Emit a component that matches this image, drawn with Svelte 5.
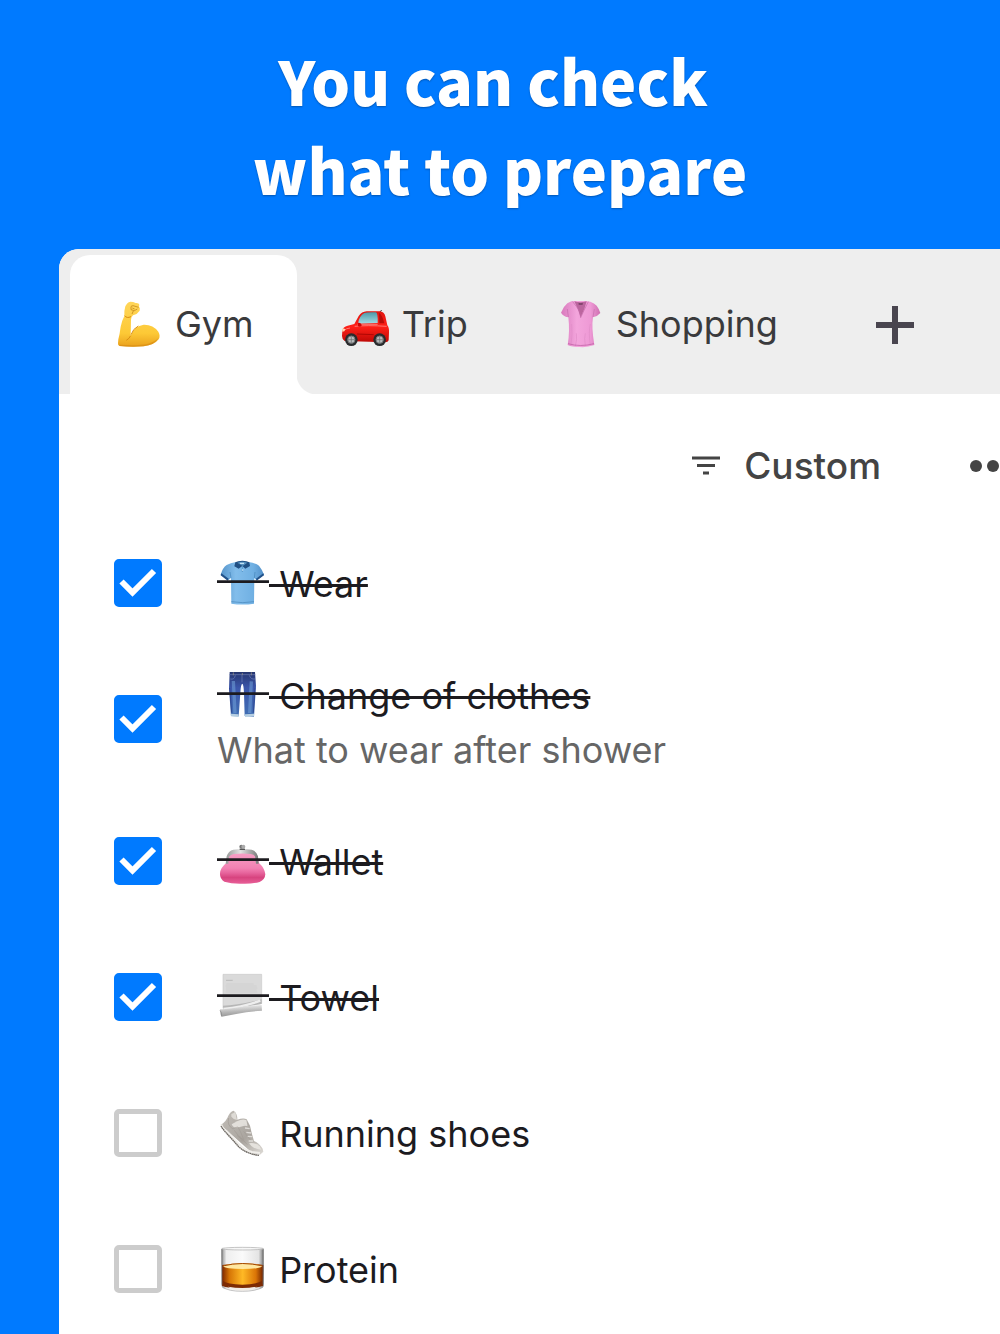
<script lang="ts">
	type Item = { id: string; icon: string; title: string; note?: string; done: boolean };

	const tabs = [
		{ icon: 'arm', label: 'Gym' },
		{ icon: 'car', label: 'Trip' },
		{ icon: 'blouse', label: 'Shopping' }
	];

	let active = $state('Gym');

	let items = $state<Item[]>([
		{ id: 'wear', icon: 'shirt', title: 'Wear', done: true },
		{
			id: 'clothes',
			icon: 'jeans',
			title: 'Change of clothes',
			note: 'What to wear after shower',
			done: true
		},
		{ id: 'wallet', icon: 'purse', title: 'Wallet', done: true },
		{ id: 'towel', icon: 'scroll', title: 'Towel', done: true },
		{ id: 'shoes', icon: 'shoe', title: 'Running shoes', done: false },
		{ id: 'protein', icon: 'glass', title: 'Protein', done: false }
	]);
</script>

{#snippet emoji(name: string, struck = false)}
	<svg class="emoji" viewBox="0 0 156 144" aria-hidden="true">
		{#if name === 'arm'}
			<defs>
				<linearGradient id="arm-skin" x1="0" y1="0" x2="0" y2="1">
					<stop offset="0" stop-color="#ffd65a" />
					<stop offset="0.7" stop-color="#fdc936" />
					<stop offset="1" stop-color="#e9a01c" />
				</linearGradient>
			</defs>
			<path
				d="M37 19Q42 7 52 5Q61 5 68 9Q78 8 79 14L78 20Q82 23 80 32Q74 42 60 46Q54 51 54 59L53 107Q64 78 92 74Q120 73 136 95Q143 108 137 118Q124 135 92 139Q58 142 20 138Q14 137 15 130L16 118Q20 103 23 80Q27 61 34 48Q33 32 37 19Z"
				fill="url(#arm-skin)"
			/>
			<path d="M35 47Q41 56 54 50M53 107Q49 116 40 121M54 104Q60 86 76 78" fill="none" stroke="#d98d12" stroke-width="3" />
			<path d="M54 19L60 17L77 22M54 20L54 29L64 32L73 27M58 24L65 27M61 33L57 42" fill="none" stroke="#b8770c" stroke-width="2" />
			<path d="M18 134Q75 138 106 131Q126 125 136 115Q126 135 92 139Q50 142 20 138Z" fill="#d98d12" opacity="0.7" />
		{:else if name === 'car'}
			<defs>
				<linearGradient id="car-glass" x1="0" y1="0" x2="0" y2="1">
					<stop offset="0" stop-color="#4d99a8" />
					<stop offset="1" stop-color="#a5dce4" />
				</linearGradient>
				<linearGradient id="car-body" x1="0" y1="0" x2="0" y2="1">
					<stop offset="0" stop-color="#e11510" />
					<stop offset="0.5" stop-color="#ff2018" />
					<stop offset="1" stop-color="#bd0805" />
				</linearGradient>
			</defs>
			<path d="M119 37L125 30" stroke="#444" stroke-width="3" />
			<path
				d="M7 92Q9 80 23 77L43 72L56 48Q65 35 80 34L119 34Q133 36 136 49L142 76Q148 83 147 98L146 121Q144 127 136 127L14 123Q6 118 6 108Z"
				fill="url(#car-body)"
			/>
			<path d="M54 71Q57 48 73 39Q81 36 108 37Q114 39 113 69Z" fill="url(#car-glass)" />
			<path d="M117 38Q127 45 133 70L118 70Z" fill="#b90c08" />
			<path d="M53 73L113 73M44 79Q81 75 140 79M30 84Q19 85 12 91" fill="none" stroke="#ff7771" stroke-width="3" />
			<path d="M51 102L101 104" stroke="#b00703" stroke-width="3" />
			<path d="M7 85L16 87L13 94L7 95Z" fill="#ffd8b0" />
			<path d="M54 68Q64 67 65 76Q63 83 54 79Z" fill="#cc0806" />
			<circle cx="34" cy="119" r="19" fill="#292b2d" />
			<circle cx="119" cy="119" r="19" fill="#292b2d" />
			<circle cx="34" cy="119" r="11" fill="#b8bbbc" stroke="#737577" stroke-width="3" />
			<circle cx="119" cy="119" r="11" fill="#b8bbbc" stroke="#737577" stroke-width="3" />
			<path d="M34 109V129M24 119H44M119 109V129M109 119H129" stroke="#686a6c" stroke-width="2" />
		{:else if name === 'blouse'}
			<defs>
				<linearGradient id="blouse-pink" x1="0" y1="0" x2="1" y2="0">
					<stop offset="0" stop-color="#d879bc" />
					<stop offset="0.4" stop-color="#f3a5dc" />
					<stop offset="0.75" stop-color="#ee99d5" />
					<stop offset="1" stop-color="#ce6eb0" />
				</linearGradient>
			</defs>
			<path
				d="M52 4L65 3L95 3L109 5Q121 9 128 17Q135 26 139 39Q131 49 117 52Q112 81 121 135Q98 143 77 141Q54 141 41 135Q48 94 43 52Q30 51 21 38Q28 20 40 10Z"
				fill="url(#blouse-pink)"
			/>
			<path d="M61 4Q78 10 98 4Q92 29 80 52Q71 24 61 4Z" fill="#bb659e" />
			<path d="M74 8Q80 12 86 8V14H74Z" fill="#743c63" />
			<path d="M56 5Q67 18 77 35L80 53Q89 32 103 5M43 51L40 27M117 51L121 27" fill="none" stroke="#c46baa" stroke-width="2" />
			<path d="M53 72Q56 101 51 136M109 72Q103 96 109 135M67 100Q70 119 64 138M94 100Q90 114 94 137" fill="none" stroke="#e08cc7" stroke-width="2" />
			<path d="M42 131Q79 142 120 131" fill="none" stroke="#b9589f" stroke-width="2" />
		{:else if name === 'shirt'}
			<defs>
				<linearGradient id="shirt-blue" x1="0" y1="0" x2="1" y2="0">
					<stop offset="0" stop-color="#5695cb" />
					<stop offset="0.35" stop-color="#82bdeb" />
					<stop offset="0.75" stop-color="#70b0e3" />
					<stop offset="1" stop-color="#518fc8" />
				</linearGradient>
			</defs>
			<path
				d="M57 9L94 9Q116 12 126 20Q135 31 141 47L118 64L112 57L111 134Q76 139 43 134L42 57L33 64L11 47Q17 26 29 18Q40 12 57 9Z"
				fill="url(#shirt-blue)"
			/>
			<path d="M13 43L35 59L32 65L11 49ZM139 43L117 59L119 65L141 49Z" fill="#235289" />
			<path d="M55 10Q62 5 76 5Q90 5 97 10L99 21L85 29L76 21L65 29L52 22Z" fill="#205084" />
			<path d="M61 11Q76 5 91 11L77 21Z" fill="#5793c0" />
			<path d="M69 13H81" stroke="#d9f0ff" stroke-width="3" />
			<path d="M76 22V39M42 57L39 39M112 57L114 39M43 128Q78 134 111 128" fill="none" stroke="#4685ba" stroke-width="2" />
			<circle cx="77" cy="33" r="2" fill="#e2f2ff" />
		{:else if name === 'jeans'}
			<defs>
				<linearGradient id="denim" x1="0" y1="0" x2="0" y2="1">
					<stop offset="0" stop-color="#26366f" />
					<stop offset="0.35" stop-color="#3b55aa" />
					<stop offset="1" stop-color="#4170b4" />
				</linearGradient>
			</defs>
			<path d="M38 3H114L117 45L111 137L83 135L81 67Q80 40 76 38Q71 40 70 67L65 136L42 135L36 52Z" fill="url(#denim)" />
			<path d="M37 11H115M75 12V34M40 24Q52 27 55 13M97 13Q101 26 114 24" fill="none" stroke="#6f80b8" stroke-width="2" />
			<path d="M49 30L54 127M103 31L98 126" stroke="#6c9bd4" stroke-width="10" opacity="0.6" />
			<path d="M38 51L44 125M114 50L109 125" fill="none" stroke="#283d85" stroke-width="2" />
			<path d="M41 128L65 130V138L42 136ZM84 130L111 128V136L84 138Z" fill="#b5cee1" />
			<path d="M76 6V12M49 4V13M103 4V13" stroke="#a19b83" stroke-width="2" />
		{:else if name === 'purse'}
			<defs>
				<linearGradient id="purse-pink" x1="0" y1="0" x2="0" y2="1">
					<stop offset="0" stop-color="#f7a0c6" />
					<stop offset="0.5" stop-color="#f281b2" />
					<stop offset="0.65" stop-color="#e7659d" />
					<stop offset="0.8" stop-color="#d7447f" />
					<stop offset="1" stop-color="#e85f98" />
				</linearGradient>
				<linearGradient id="purse-metal" x1="0" y1="0" x2="1" y2="0">
					<stop offset="0" stop-color="#969696" />
					<stop offset="0.45" stop-color="#e2e2e2" />
					<stop offset="1" stop-color="#777" />
				</linearGradient>
			</defs>
			<path d="M34 51Q77 42 119 51L126 78Q143 93 145 112Q144 128 128 135Q105 141 76 140Q44 141 22 134Q8 126 9 109Q10 92 28 78Z" fill="url(#purse-pink)" />
			<path d="M26 80L29 58Q34 41 49 38Q76 34 104 38Q118 42 123 58L125 80H117L114 58Q111 52 101 51Q77 48 51 51Q39 53 36 61L34 80Z" fill="url(#purse-metal)" />
			<circle cx="73" cy="29" r="6" fill="#777" />
			<circle cx="79" cy="29" r="6" fill="#aaa" />
			<path d="M68 37H84" stroke="#555" stroke-width="4" />
		{:else if name === 'scroll'}
			<defs>
				<linearGradient id="scroll-roll" x1="0.4" y1="0" x2="0.6" y2="1">
					<stop offset="0" stop-color="#f1f1f1" />
					<stop offset="0.55" stop-color="#b5b5b5" />
					<stop offset="1" stop-color="#919191" />
				</linearGradient>
			</defs>
			<path d="M18 4H134V91L18 106Z" fill="#dadada" stroke="#cacaca" stroke-width="2" />
			<path d="M27 22H47" stroke="#aaa" stroke-width="2" />
			<path d="M28 33H110M26 39H119M27 45H121M27 51H119M26 57H121" stroke="#cbcbcb" stroke-width="2" />
			<path d="M18 98Q61 97 134 79V93L18 111Z" fill="#b6b6b6" />
			<path d="M19 108Q81 101 130 83" fill="none" stroke="#eee" stroke-width="7" />
			<path d="M9 109Q26 109 71 102Q104 97 134 96L135 113Q94 116 62 122L14 131Q9 126 9 109Z" fill="url(#scroll-roll)" />
			<path d="M9 112Q15 118 14 130" fill="none" stroke="#858585" stroke-width="2" />
		{:else if name === 'shoe'}
			<defs>
				<linearGradient id="shoe-grey" x1="0" y1="0" x2="1" y2="1">
					<stop offset="0" stop-color="#c2beb8" />
					<stop offset="0.6" stop-color="#aaa59f" />
					<stop offset="1" stop-color="#dedbd6" />
				</linearGradient>
			</defs>
			<path d="M11 48Q28 37 34 20Q41 7 50 5Q61 12 61 32Q80 25 89 31L99 50L104 72L111 96Q127 103 137 119L139 128L129 137L109 135Z" fill="url(#shoe-grey)" />
			<path d="M43 15Q48 13 55 8L60 33Q51 33 43 23Z" fill="#dedbd6" />
			<path d="M60 37Q75 29 88 33L91 48L60 56Q48 57 44 46Z" fill="#e2dfda" />
			<path d="M35 27Q29 49 48 60Q57 54 63 54Q71 68 80 91Q68 89 60 79M52 64L77 97M80 67L101 94M67 81L91 107" fill="none" stroke="#a19c96" stroke-width="2" />
			<path d="M13 46Q15 57 29 67L63 103Q81 123 105 129L129 132" fill="none" stroke="#f0eeea" stroke-width="6" />
			<path d="M12 51Q22 67 41 86L65 113Q89 135 126 139" fill="none" stroke="#6d6862" stroke-width="4" stroke-dasharray="5 1" />
			<path d="M79 46L91 50M84 57L98 59M88 70L102 72M92 82L106 83M95 96L108 96" stroke="#dedbd7" stroke-width="4" />
			<path d="M96 103Q113 99 128 112L133 122Q114 121 103 111Z" fill="#e5e2dd" />
		{:else if name === 'glass'}
			<defs>
				<linearGradient id="whisky" x1="0" y1="0" x2="1" y2="0">
					<stop offset="0" stop-color="#7c2500" />
					<stop offset="0.18" stop-color="#d67506" />
					<stop offset="0.5" stop-color="#ffb925" />
					<stop offset="0.82" stop-color="#da7406" />
					<stop offset="1" stop-color="#702000" />
				</linearGradient>
				<linearGradient id="tumbler" x1="0" y1="0" x2="1" y2="0">
					<stop offset="0" stop-color="#898989" />
					<stop offset="0.12" stop-color="#eee" />
					<stop offset="0.5" stop-color="#fafafa" />
					<stop offset="0.88" stop-color="#e4e4e4" />
					<stop offset="1" stop-color="#777" />
				</linearGradient>
			</defs>
			<path d="M13 11Q76 3 140 11V123Q137 138 76 139Q17 138 14 123Z" fill="url(#tumbler)" />
			<path d="M15 60Q76 50 139 60L138 117Q120 128 76 129Q31 128 15 117Z" fill="url(#whisky)" />
			<ellipse cx="77" cy="64" rx="58" ry="8" fill="#ffe7a0" />
			<path d="M17 63Q77 48 137 63" fill="none" stroke="#a24700" stroke-width="3" />
			<path d="M15 106Q31 119 76 119Q121 119 138 106V122Q121 130 76 130Q31 130 15 122Z" fill="#7d2b04" />
			<path d="M33 125Q76 133 119 125Q103 137 76 137Q49 137 33 125Z" fill="#f1ece6" />
			<path d="M17 126Q34 139 76 139Q118 139 136 126" fill="none" stroke="#aaa" stroke-width="2" />
			<path d="M15 13V119M138 13V119" stroke="#696969" stroke-width="2" />
			<ellipse cx="77" cy="11" rx="62" ry="4" fill="#f7f7f7" stroke="#aaa" stroke-width="2" />
		{/if}
		{#if struck}
			<path d="M0 68H156" stroke="#1c1b1f" stroke-width="8" />
		{/if}
	</svg>
{/snippet}

<main>
	<h1>You can check&nbsp;<br />what to prepare</h1>

	<section class="panel">
		<nav class="tabs">
			{#each tabs as tab}
				<button
					class="tab"
					class:active={active === tab.label}
					onclick={() => (active = tab.label)}
				>
					{@render emoji(tab.icon)}
					<span>{tab.label}</span>
				</button>
			{/each}
			<button class="add" aria-label="Add list">
				<svg viewBox="0 0 38 38"><path d="M19 0V38M0 19H38" /></svg>
			</button>
		</nav>

		<div class="toolbar">
			<button class="sort">
				<svg viewBox="0 0 28 20"><path d="M0 2H28M5 9.5H23M11 17H17" /></svg>
				<span>Custom</span>
			</button>
			<button class="more" aria-label="More options">
				<svg viewBox="0 0 48 12">
					<circle cx="7" cy="6" r="6" />
					<circle cx="24" cy="6" r="6" />
					<circle cx="41" cy="6" r="6" />
				</svg>
			</button>
		</div>

		<ul>
			{#each items as item (item.id)}
				<li>
					<span class="check">
						<input type="checkbox" id={item.id} bind:checked={item.done} />
						{#if item.done}
							<svg viewBox="0 0 48 48"><path d="M7.5 22.5L18.5 33.5L40 12" /></svg>
						{/if}
					</span>
					<label for={item.id}>
						<span class="title">
							{@render emoji(item.icon, item.done)}
							<span class="name" class:done={item.done}>&nbsp;{item.title}</span>
						</span>
						{#if item.note}
							<span class="note">{item.note}</span>
						{/if}
					</label>
				</li>
			{/each}
		</ul>
	</section>
</main>

<style>
	:global(body) {
		background: #007aff;
	}

	main {
		display: flex;
		flex-direction: column;
		min-height: 100vh;
		padding-top: 35px;
		box-sizing: border-box;
		overflow: hidden;
		font-family: Inter, 'Liberation Sans', sans-serif;
		font-size: 36px;
		color: #1c1b1f;
	}

	h1 {
		margin: 0 0 36px;
		font-family: 'Noto Sans CJK JP', 'Noto Sans', sans-serif;
		font-size: 61px;
		font-weight: 900;
		line-height: 89px;
		text-align: center;
		color: white;
		text-shadow: 0 1px 2px rgba(0, 0, 0, 0.3);
	}

	button {
		display: flex;
		align-items: center;
		border: none;
		padding: 0;
		background: none;
		font: inherit;
		color: inherit;
		cursor: pointer;
	}

	svg {
		display: block;
		flex: none;
	}

	.panel {
		flex: 1;
		margin-left: 59px;
		border-radius: 20px 0 0;
		background: white;
		overflow: hidden;
	}

	.tabs {
		display: flex;
		height: 145px;
		padding: 6px 0 0 11px;
		box-sizing: border-box;
		background: #eeeeee;
	}

	.tab {
		position: relative;
		gap: 10px;
		padding: 0 43px 2px;
		color: #3a3a3c;
	}

	.tab.active {
		border-radius: 20px 20px 0 0;
		background: white;
	}

	/* flared foot where the open tab meets the page */
	.tab.active::after {
		content: '';
		position: absolute;
		left: 100%;
		bottom: 0;
		width: 20px;
		height: 20px;
		background: radial-gradient(circle at 100% 0, transparent 20px, white 21px);
	}

	.emoji {
		width: 52px;
		height: 48px;
	}

	.add {
		padding: 0 55px;
	}

	.add svg {
		width: 38px;
		height: 38px;
		stroke: #49454f;
		stroke-width: 6;
	}

	.toolbar {
		display: flex;
		justify-content: flex-end;
		gap: 88px;
		height: 121px;
		padding-top: 22px;
		margin-right: -17px;
		box-sizing: border-box;
		color: #444444;
	}

	.sort,
	.more {
		height: 99px;
	}

	.sort {
		gap: 24px;
		font-size: 37px;
		font-weight: 500;
	}

	.sort svg {
		width: 28px;
		height: 20px;
		stroke: currentColor;
		stroke-width: 3;
	}

	.more svg {
		width: 48px;
		height: 12px;
		fill: currentColor;
	}

	ul {
		margin: 0;
		padding: 0;
		list-style: none;
	}

	li {
		display: flex;
		gap: 55px;
		min-height: 136px;
		padding: 16px 55px;
		box-sizing: border-box;
	}

	.check {
		display: grid;
		width: 48px;
		height: 48px;
		margin-top: 28px;
	}

	.check input,
	.check svg {
		grid-area: 1 / 1;
		width: 48px;
		height: 48px;
	}

	.check input {
		appearance: none;
		margin: 0;
		border: 5px solid #cccccc;
		border-radius: 5px;
		cursor: pointer;
	}

	.check input:checked {
		border-color: #007aff;
		background: #007aff;
	}

	.check svg {
		fill: none;
		stroke: white;
		stroke-width: 6;
		pointer-events: none;
	}

	label {
		display: flex;
		flex-direction: column;
		justify-content: center;
		line-height: 54px;
	}

	.title {
		display: flex;
		align-items: center;
	}

	.name {
		padding-top: 2px;
	}

	.done {
		text-decoration: line-through;
		text-decoration-thickness: 3px;
	}

	.note {
		color: #666666;
	}
</style>
